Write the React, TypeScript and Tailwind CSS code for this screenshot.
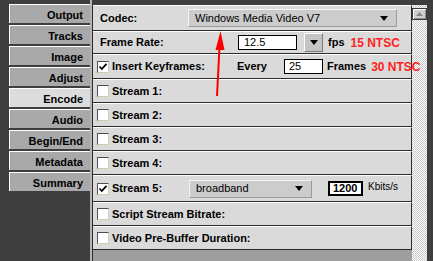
import React from "react";

const tabs = ["Output", "Tracks", "Image", "Adjust", "Encode", "Audio", "Begin/End", "Metadata", "Summary"];

const row =
  "flex items-center bg-[#dadada] border-t border-t-white border-b border-b-[#2c2c2c] border-r border-r-[#2c2c2c] [&>*]:shrink-0";

function Check({ on = false }: { on?: boolean }) {
  return (
    <span className="flex h-[12px] w-[12px] shrink-0 items-center justify-center border border-t-[#505050] border-l-[#505050] border-r-[#d6cab2] border-b-[#d6cab2] bg-white">
      {on && (
        <svg width="10" height="10" viewBox="0 0 10 10">
          <polyline points="1.5,4.5 3.8,7 8.5,1.8" fill="none" stroke="#000" strokeWidth="1.8" />
        </svg>
      )}
    </span>
  );
}

function Arrow() {
  return (
    <svg width="8" height="5" viewBox="0 0 8 5">
      <polygon points="0,0 8,0 4,5" fill="#000" />
    </svg>
  );
}

function Select({ value, className }: { value: string; className: string }) {
  return (
    <div
      className={`flex items-center justify-between border border-t-[#f4f4f4] border-l-[#f4f4f4] border-r-[#9a9a9a] border-b-[#9a9a9a] bg-[#cccccc] pl-[6px] pr-[8px] text-[11px] font-normal text-black ${className}`}
    >
      <span>{value}</span>
      <Arrow />
    </div>
  );
}

function StreamRow({ label, on = false }: { label: string; on?: boolean }) {
  return (
    <div className={`${row} h-[24px] pl-[4px]`}>
      <Check on={on} />
      <span className="ml-[3px]">{label}</span>
    </div>
  );
}

export default function App() {
  return (
    <div className="relative flex h-[261px] w-[433px] overflow-hidden bg-[#3e3e3e] font-['Liberation_Sans',Arial,sans-serif] text-[11px] font-bold text-black">
      {/* tabs */}
      <div className="flex w-[90px] shrink-0 flex-col gap-[2px] pl-[9px] pt-[4px]">
        {tabs.map((t) => (
          <div
            key={t}
            className={`flex h-[19px] items-center justify-end border-t border-l border-white pr-[7px] pt-[2px] ${
              t === "Encode" ? "bg-[#dcdcdc]" : "bg-[#a9a9a9]"
            }`}
          >
            {t}
          </div>
        ))}
      </div>

      {/* panel */}
      <div className="flex w-[322px] shrink-0 flex-col border-l-2 border-l-[#b4b4b4] pt-[5px]">
        <div className="flex flex-1 flex-col border-l border-l-[#2c2c2c]">
          <div className={`${row} h-[26px] pl-[7px]`}>
            <span className="w-[88px]">Codec:</span>
            <Select value="Windows Media Video V7" className="h-[18px] w-[209px]" />
          </div>

          <div className={`${row} h-[23px] pl-[7px]`}>
            <span className="w-[138px]">Frame Rate:</span>
            <div className="flex h-[15px] w-[59px] items-center border border-black bg-white pl-[5px] font-normal">12.5</div>
            <div className="ml-[7px] flex h-[19px] w-[19px] items-center justify-center border border-t-white border-l-white border-r-[#7a7a7a] border-b-[#7a7a7a] bg-[#c4c4c4]">
              <Arrow />
            </div>
            <span className="ml-[5px]">fps</span>
            <span className="ml-[6px] text-[12px] text-[#ff1f1f]">15 NTSC</span>
          </div>

          <div className={`${row} h-[25px] pl-[4px]`}>
            <Check on />
            <span className="ml-[3px] w-[125px]">Insert Keyframes:</span>
            <span className="w-[47px]">Every</span>
            <div className="flex h-[15px] w-[39px] items-center border border-black bg-white pl-[4px] font-normal">25</div>
            <span className="ml-[4px]">Frames</span>
            {/* spills over the scrollbar in the original */}
            <span className="relative z-10 ml-[5px] whitespace-nowrap text-[12px] text-[#ff1f1f]">30 NTSC</span>
          </div>

          <StreamRow label="Stream 1:" />
          <StreamRow label="Stream 2:" />
          <StreamRow label="Stream 3:" />
          <StreamRow label="Stream 4:" />

          <div className={`${row} h-[27px] pl-[4px]`}>
            <Check on />
            <span className="ml-[3px] w-[77px]">Stream 5:</span>
            <Select value="broadband" className="h-[18px] w-[123px]" />
            <div className="ml-[16px] flex h-[15px] w-[35px] items-center border-2 border-black bg-white pl-[3px] text-[11px] leading-none">1200</div>
            <span className="ml-[5px] -mt-[5px] text-[10px] font-normal">Kbits/s</span>
          </div>

          <StreamRow label="Script Stream Bitrate:" />
          <StreamRow label="Video Pre-Buffer Duration:" />

          <div className="flex-1 bg-[#9e9e9e]" />
        </div>
      </div>

      {/* scrollbar */}
      <div className="mt-[5px] flex w-[15px] shrink-0 flex-col bg-[image:repeating-conic-gradient(#c8c8c8_0%_25%,#ffffff_0%_50%)] bg-[length:2px_2px]">
        <div className="mt-[3px] flex h-[12px] w-[15px] items-center justify-center border border-[#3a3a3a] bg-[#cfcfcf] shadow-[inset_1px_1px_0_#ffffff,inset_-1px_-1px_0_#8c8c8c]">
          <svg width="7" height="4" viewBox="0 0 7 4">
            <polygon points="0,4 7,4 3.5,0" fill="#8a8a8a" />
          </svg>
        </div>
      </div>
      <div className="w-[6px] shrink-0" />

      {/* annotation arrow */}
      <svg className="pointer-events-none absolute left-0 top-0" width="433" height="261">
        <line x1="217" y1="96" x2="219.5" y2="47" stroke="#ff0000" strokeWidth="2" />
        <polygon points="220.5,31 215.5,50 224.5,50" fill="#ff0000" />
      </svg>
    </div>
  );
}
